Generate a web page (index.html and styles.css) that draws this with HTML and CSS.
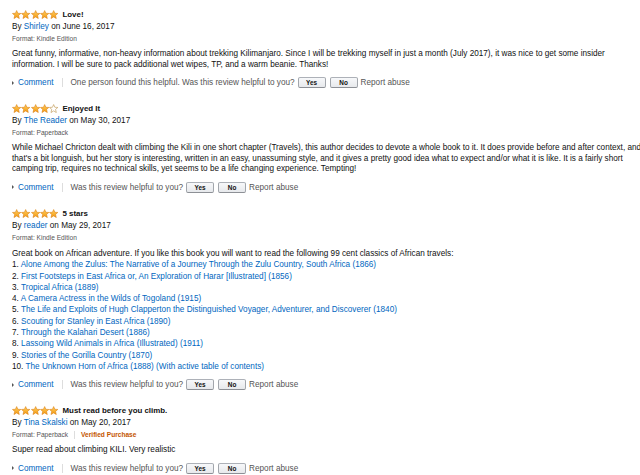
FILE: index.html
```html
<!DOCTYPE html>
<html>
<head>
<meta charset="utf-8">
<link rel="stylesheet" href="styles.css">
</head>
<body>
<svg width="0" height="0" class="defs">
  <defs>
    <linearGradient id="sg" x1="0" y1="0" x2="0" y2="1">
      <stop offset="0" stop-color="#ffce5c"/>
      <stop offset="1" stop-color="#f49b14"/>
    </linearGradient>
    <symbol id="star" viewBox="0 0 20 20">
      <polygon points="10,1.2 12.6,7 19,7.4 14.1,11.6 15.7,18.4 10,14.8 4.3,18.4 5.9,11.6 1,7.4 7.4,7" fill="url(#sg)" stroke="#d97c10" stroke-width="1.2" stroke-linejoin="round"/>
    </symbol>
    <symbol id="star-empty" viewBox="0 0 20 20">
      <polygon points="10,1.2 12.6,7 19,7.4 14.1,11.6 15.7,18.4 10,14.8 4.3,18.4 5.9,11.6 1,7.4 7.4,7" fill="#fff" stroke="#b98b3e" stroke-width="1.2" stroke-linejoin="round"/>
    </symbol>
  </defs>
</svg>
<div class="reviews">

  <div class="review">
    <div class="title-row">
      <span class="stars"><svg><use href="#star"/></svg><svg><use href="#star"/></svg><svg><use href="#star"/></svg><svg><use href="#star"/></svg><svg><use href="#star"/></svg></span>
      <span class="title">Love!</span>
    </div>
    <div class="byline">By <a class="link">Shirley</a> on June 16, 2017</div>
    <div class="format">Format: Kindle Edition</div>
    <div class="body">Great funny, informative, non-heavy information about trekking Kilimanjaro. Since I will be trekking myself in just a month (July 2017), it was nice to get some insider information. I will be sure to pack additional wet wipes, TP, and a warm beanie. Thanks!</div>
    <div class="actions">
      <span class="caret"></span><a class="link comment">Comment</a>
      <span class="sep"></span>
      <span class="helpful">One person found this helpful. Was this review helpful to you?</span>
      <span class="btn">Yes</span><span class="btn">No</span>
      <span class="report">Report abuse</span>
    </div>
  </div>

  <div class="review">
    <div class="title-row">
      <span class="stars"><svg><use href="#star"/></svg><svg><use href="#star"/></svg><svg><use href="#star"/></svg><svg><use href="#star"/></svg><svg><use href="#star-empty"/></svg></span>
      <span class="title">Enjoyed It</span>
    </div>
    <div class="byline">By <a class="link">The Reader</a> on May 30, 2017</div>
    <div class="format">Format: Paperback</div>
    <div class="body">While Michael Chricton dealt with climbing the Kili in one short chapter (Travels), this author decides to devote a whole book to it. It does provide before and after context, and that's a bit longuish, but her story is interesting, written in an easy, unassuming style, and it gives a pretty good idea what to expect and/or what it is like. It is a fairly short camping trip, requires no technical skills, yet seems to be a life changing experience. Tempting!</div>
    <div class="actions">
      <span class="caret"></span><a class="link comment">Comment</a>
      <span class="sep"></span>
      <span class="helpful">Was this review helpful to you?</span>
      <span class="btn">Yes</span><span class="btn">No</span>
      <span class="report">Report abuse</span>
    </div>
  </div>

  <div class="review">
    <div class="title-row">
      <span class="stars"><svg><use href="#star"/></svg><svg><use href="#star"/></svg><svg><use href="#star"/></svg><svg><use href="#star"/></svg><svg><use href="#star"/></svg></span>
      <span class="title">5 stars</span>
    </div>
    <div class="byline">By <a class="link">reader</a> on May 29, 2017</div>
    <div class="format">Format: Kindle Edition</div>
    <div class="body list">
      <div>Great book on African adventure. If you like this book you will want to read the following 99 cent classics of African travels:</div>
      <div>1. <a class="link">Alone Among the Zulus: The Narrative of a Journey Through the Zulu Country, South Africa (1866)</a></div>
      <div>2. <a class="link">First Footsteps in East Africa or, An Exploration of Harar [Illustrated] (1856)</a></div>
      <div>3. <a class="link">Tropical Africa (1889)</a></div>
      <div>4. <a class="link">A Camera Actress in the Wilds of Togoland (1915)</a></div>
      <div>5. <a class="link">The Life and Exploits of Hugh Clapperton the Distinguished Voyager, Adventurer, and Discoverer (1840)</a></div>
      <div>6. <a class="link">Scouting for Stanley in East Africa (1890)</a></div>
      <div>7. <a class="link">Through the Kalahari Desert (1886)</a></div>
      <div>8. <a class="link">Lassoing Wild Animals in Africa (Illustrated) (1911)</a></div>
      <div>9. <a class="link">Stories of the Gorilla Country (1870)</a></div>
      <div>10. <a class="link">The Unknown Horn of Africa (1888) (With active table of contents)</a></div>
    </div>
    <div class="actions">
      <span class="caret"></span><a class="link comment">Comment</a>
      <span class="sep"></span>
      <span class="helpful">Was this review helpful to you?</span>
      <span class="btn">Yes</span><span class="btn">No</span>
      <span class="report">Report abuse</span>
    </div>
  </div>

  <div class="review">
    <div class="title-row">
      <span class="stars"><svg><use href="#star"/></svg><svg><use href="#star"/></svg><svg><use href="#star"/></svg><svg><use href="#star"/></svg><svg><use href="#star"/></svg></span>
      <span class="title">Must read before you climb.</span>
    </div>
    <div class="byline">By <a class="link">Tina Skalski</a> on May 20, 2017</div>
    <div class="format">Format: Paperback<span class="sep small"></span><span class="verified">Verified Purchase</span></div>
    <div class="body">Super read about climbing KILI. Very realistic</div>
    <div class="actions">
      <span class="caret"></span><a class="link comment">Comment</a>
      <span class="sep"></span>
      <span class="helpful">Was this review helpful to you?</span>
      <span class="btn">Yes</span><span class="btn">No</span>
      <span class="report">Report abuse</span>
    </div>
  </div>

</div>
</body>
</html>
```

FILE: styles.css
```css
html, body {
  margin: 0;
  padding: 0;
  background: #fff;
  overflow: hidden;
}

.defs {
  position: absolute;
  width: 0;
  height: 0;
}

.reviews {
  font-family: "Liberation Sans", Arial, sans-serif;
  font-size: 8.2px;
  color: #111;
  padding: 9px 0 0 12px;
}

.review {
  margin-bottom: 14px;
}

.link {
  color: #0066c0;
  text-decoration: none;
}

.title-row {
  display: flex;
  align-items: center;
  height: 11px;
}

.stars {
  display: flex;
  margin-right: 4px;
}

.stars svg {
  width: 9.3px;
  height: 9.3px;
  display: block;
}

.title {
  font-weight: bold;
  font-size: 7.9px;
}

.byline {
  line-height: 12px;
  height: 12px;
  margin-top: 1px;
}

.format {
  font-size: 6.6px;
  color: #555;
  line-height: 12px;
  height: 12px;
  display: flex;
  align-items: center;
}

.verified {
  color: #c45500;
  font-weight: bold;
}

.body {
  margin-top: 4px;
  line-height: 10.6px;
  width: 636px;
}

.list {
  line-height: 11.3px;
}

.actions {
  margin-top: 6px;
  display: flex;
  align-items: center;
  height: 13px;
  color: #555;
}

.caret {
  width: 0;
  height: 0;
  border-left: 2.5px solid #555;
  border-top: 2px solid transparent;
  border-bottom: 2px solid transparent;
  margin-right: 4px;
}

.sep {
  width: 1px;
  height: 9px;
  background: #ddd;
  margin: 0 8px;
}

.sep.small {
  height: 8px;
  margin: 0 6px;
}

.helpful {
  color: #555;
  margin-right: 3px;
}

.btn {
  box-sizing: border-box;
  width: 28px;
  height: 11px;
  border: 1px solid #adb1b8;
  border-color: #adb1b8 #a2a6ac #8d9096;
  border-radius: 2px;
  background: linear-gradient(#f7f8fa, #e7e9ec);
  font-size: 6.4px;
  font-weight: bold;
  color: #111;
  display: flex;
  align-items: center;
  justify-content: center;
  margin-right: 4px;
}

.report {
  color: #555;
  margin-left: -1px;
}
```
